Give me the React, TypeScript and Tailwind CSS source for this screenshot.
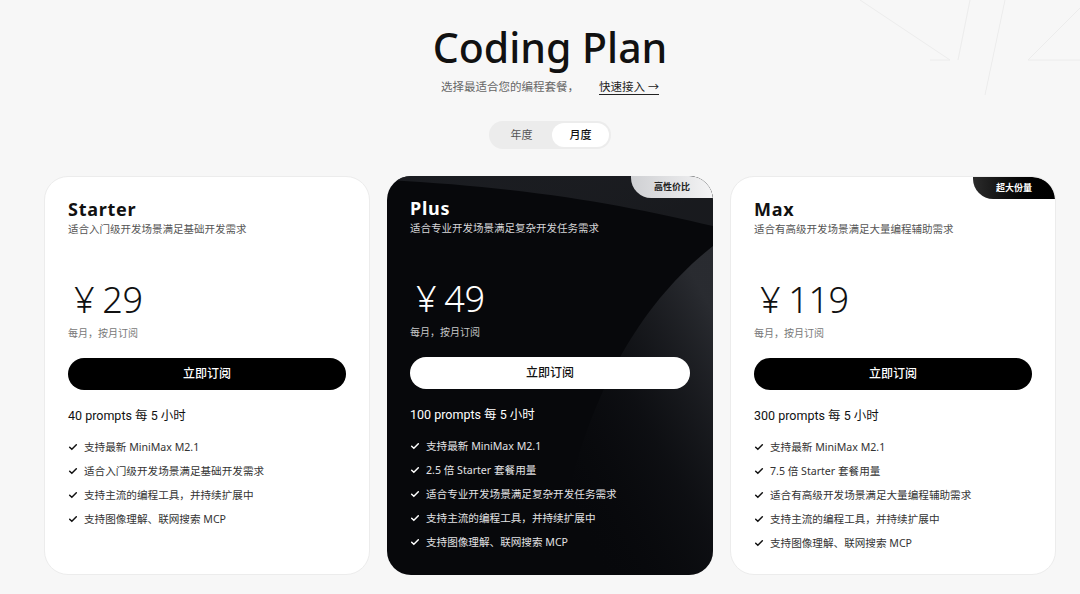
import React from "react";

const FONT = { fontFamily: '"Noto Sans", "Noto Sans CJK SC", sans-serif' };
const PROMPT_FONT = { fontFamily: 'Roboto, "Noto Sans CJK SC", sans-serif' };

function Check({ className }: { className?: string }) {
  return (
    <svg viewBox="0 0 12 12" className={className} width="10" height="10" fill="none">
      <path d="M2 6.3 L4.6 8.8 L10 3.4" stroke="currentColor" strokeWidth="1.8" strokeLinecap="round" strokeLinejoin="round" />
    </svg>
  );
}

type Plan = {
  name: string;
  desc: string;
  price: string;
  prompts: string;
  features: string[];
  dark?: boolean;
  badge?: string;
};

const plans: Plan[] = [
  {
    name: "Starter",
    desc: "适合入门级开发场景满足基础开发需求",
    price: "29",
    prompts: "40 prompts 每 5 小时",
    features: ["支持最新 MiniMax M2.1", "适合入门级开发场景满足基础开发需求", "支持主流的编程工具，并持续扩展中", "支持图像理解、联网搜索 MCP"],
  },
  {
    name: "Plus",
    desc: "适合专业开发场景满足复杂开发任务需求",
    price: "49",
    prompts: "100 prompts 每 5 小时",
    features: ["支持最新 MiniMax M2.1", "2.5 倍 Starter 套餐用量", "适合专业开发场景满足复杂开发任务需求", "支持主流的编程工具，并持续扩展中", "支持图像理解、联网搜索 MCP"],
    dark: true,
    badge: "高性价比",
  },
  {
    name: "Max",
    desc: "适合有高级开发场景满足大量编程辅助需求",
    price: "119",
    prompts: "300 prompts 每 5 小时",
    features: ["支持最新 MiniMax M2.1", "7.5 倍 Starter 套餐用量", "适合有高级开发场景满足大量编程辅助需求", "支持主流的编程工具，并持续扩展中", "支持图像理解、联网搜索 MCP"],
    badge: "超大份量",
  },
];

function Card({ p }: { p: Plan }) {
  const dark = !!p.dark;
  return (
    <div
      className={
        "relative overflow-hidden rounded-[24px] pt-[21px] pb-[24px] " +
        (dark ? "bg-[#07080b] text-white px-[23px]" : "bg-white text-[#111] border border-[#ececec] px-[23px]")
      }
    >
      {dark && (
        <svg className="absolute inset-0 w-full h-full pointer-events-none" viewBox="0 0 326 399" preserveAspectRatio="none">
          <defs>
            <linearGradient id="g1" x1="0" y1="0" x2="1" y2="0.3">
              <stop offset="0" stopColor="#1c1e23" stopOpacity="0.9" />
              <stop offset="1" stopColor="#2a2c31" stopOpacity="0.5" />
            </linearGradient>
            <linearGradient id="g2" x1="1" y1="0.2" x2="0.3" y2="1">
              <stop offset="0" stopColor="#4a4d54" stopOpacity="0.85" />
              <stop offset="0.5" stopColor="#1d1f24" stopOpacity="0.5" />
              <stop offset="1" stopColor="#07080b" stopOpacity="0" />
            </linearGradient>
          </defs>
          <path d="M0 0 H326 V50 C240 30 150 12 0 4 Z" fill="url(#g1)" />
          <path d="M326 70 C250 130 190 230 165 399 H326 Z" fill="url(#g2)" opacity="0.6" />
        </svg>
      )}
      {p.badge && (
        <div
          className={
            "absolute top-0 right-0 h-[22px] w-[82px] flex items-center justify-center rounded-bl-[22px] rounded-tr-[24px] text-[9px] font-bold " +
            (dark
              ? "bg-gradient-to-r from-[#cfd0d3] to-[#f4f4f5] text-[#222]"
              : "bg-gradient-to-r from-[#2b2b2b] to-[#000] text-white")
          }
        >
          {p.badge}
        </div>
      )}
      <div className="relative">
        <div className="text-[18px] leading-[22px] font-bold tracking-[0.04em]">{p.name}</div>
        <div className={"text-[10.5px] leading-[16px] mt-[1px] " + (dark ? "text-[#d6d6d8]" : "text-[#555]")}>{p.desc}</div>
        <div className="mt-[43px] text-[36px] leading-[40px] font-light tracking-[-0.01em] flex items-baseline">
          <span className="ml-[6px] mr-[8px]">¥</span>
          <span>{p.price}</span>
        </div>
        <div className={"text-[10px] leading-[14px] mt-[6px] " + (dark ? "text-[#c8c8ca]" : "text-[#777]")}>每月，按月订阅</div>
        <button
          className={
            "mt-[18px] w-full h-[32px] rounded-full text-[12px] font-medium flex items-center justify-center " +
            (dark ? "bg-white text-[#111]" : "bg-black text-white")
          }
        >
          立即订阅
        </button>
        <div className="mt-[17px] text-[12.5px] leading-[18px] font-normal" style={PROMPT_FONT}>{p.prompts}</div>
        <ul className="mt-[14px] flex flex-col gap-[8px]">
          {p.features.map((f) => (
            <li key={f} className={"flex items-center gap-[6px] text-[10.6px] leading-[16px] " + (dark ? "text-[#e2e2e4]" : "text-[#333]")}>
              <Check className={dark ? "text-white" : "text-[#111]"} />
              <span>{f}</span>
            </li>
          ))}
        </ul>
      </div>
    </div>
  );
}

export default function App() {
  return (
    <div className="relative w-[1080px] h-[594px] overflow-hidden bg-[#f7f7f7]" style={FONT}>
      <svg className="absolute top-0 right-0 pointer-events-none" width="240" height="100" viewBox="0 0 240 100" fill="none">
        <path d="M20 0 L110 60 L90 60" stroke="#ececec" strokeWidth="1" />
        <path d="M130 0 L118 60" stroke="#ececec" strokeWidth="1" />
        <path d="M165 0 L145 95" stroke="#ececec" strokeWidth="1" />
        <path d="M240 8 L188 60 L240 60" stroke="#ececec" strokeWidth="1" />
      </svg>
      <div className="relative pl-[44px] pr-[24px] pt-[22px]">
        <h1 className="text-center text-[41px] leading-[50px] font-medium text-[#111]">Coding Plan</h1>
        <div className="mt-[6px] flex justify-center items-center text-[11.5px] leading-[18px] text-[#666]">
          <span>选择最适合您的编程套餐，</span>
          <span className="ml-[20px] text-[#222] underline underline-offset-[3px]">
            快速接入 <span className="text-[11px]">→</span>
          </span>
        </div>
        <div className="mt-[25px] flex justify-center">
          <div className="flex items-center rounded-full bg-[#ececec] p-[2px] h-[28px]">
            <div className="w-[61px] h-[24px] flex items-center justify-center text-[11px] text-[#555]">年度</div>
            <div className="w-[57px] h-[24px] flex items-center justify-center rounded-full bg-white text-[11px] font-medium text-[#111]">月度</div>
          </div>
        </div>
        <div className="mt-[27px] grid grid-cols-3 gap-[17px] h-[399px]">
          {plans.map((p) => (
            <Card key={p.name} p={p} />
          ))}
        </div>
      </div>
    </div>
  );
}
